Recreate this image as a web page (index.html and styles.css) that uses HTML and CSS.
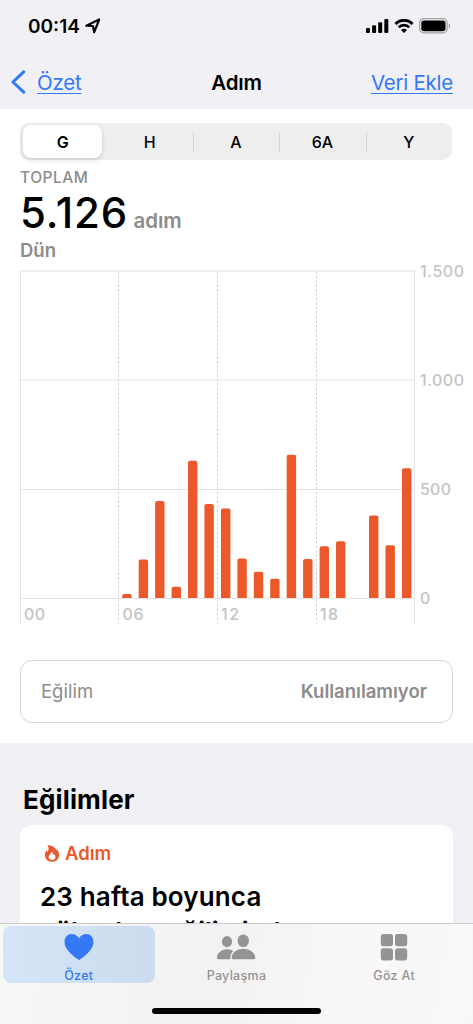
FILE: index.html
```html
<!DOCTYPE html>
<html lang="tr">
<head>
  <meta charset="UTF-8">
  <title>Adım</title>
  <link rel="stylesheet" href="styles.css">
</head>
<body>
  <div class="phone">

    <!-- Status bar + navigation -->
    <header class="top">
      <div class="status-bar">
        <div class="status-left">
          <span class="time">00:14</span>
          <svg class="location" width="16" height="16" viewBox="0 0 16 16"><path d="M1.3 7.7 14.2 1.5 9.2 14.2 7.9 8Z"/></svg>
        </div>
        <div class="status-right">
          <svg width="23" height="14" viewBox="0 0 23 14">
            <rect x="0" y="9" width="4" height="5" rx="1.1"/>
            <rect x="6.1" y="6.3" width="4" height="7.7" rx="1.1"/>
            <rect x="12.2" y="3.2" width="4" height="10.8" rx="1.1"/>
            <rect x="18.3" y="0" width="4" height="14" rx="1.1"/>
          </svg>
          <svg width="20" height="14" viewBox="0 0 20 14">
            <path class="wifi-arc" d="M1.4 4.9C6.3.2 13.7.2 18.6 4.9M4.6 8.2c3.1-2.9 7.7-2.9 10.8 0"/>
            <path d="M10 14 6.9 10.9c1.7-1.5 4.5-1.5 6.2 0Z"/>
          </svg>
          <svg width="32" height="16" viewBox="0 0 32 16">
            <rect class="battery-shell" x=".6" y=".7" width="27.6" height="14.2" rx="4.3"/>
            <rect x="2.3" y="2.4" width="24.2" height="10.8" rx="2.7"/>
            <path class="battery-cap" d="M29.7 5.4c1.9.6 1.9 4.2 0 4.8Z"/>
          </svg>
        </div>
      </div>
      <nav class="nav-bar">
        <a class="back">
          <svg width="15" height="24" viewBox="0 0 15 24"><path d="M12.7 1.8 1.9 12l10.8 10.2"/></svg>
          <span class="link">Özet</span>
        </a>
        <h1>Adım</h1>
        <a class="link add">Veri Ekle</a>
      </nav>
    </header>

    <main class="summary">
      <div class="segments">
        <span class="segment active">G</span>
        <span class="segment">H</span>
        <span class="segment divided">A</span>
        <span class="segment divided">6A</span>
        <span class="segment divided">Y</span>
      </div>

      <div class="total">
        <div class="total-label">TOPLAM</div>
        <div class="total-value"><strong>5.126</strong> <span>adım</span></div>
        <div class="total-day">Dün</div>
      </div>

      <!-- Hourly steps, 0 - 1.500 -->
      <svg class="chart" width="453" height="364" viewBox="20 264 453 364">
        <g class="grid">
          <path d="M20 271h395M20 380h395M20 489.5h395M20 598.5h395"/>
          <path d="M20.5 271v353M414.5 271v353"/>
          <path class="dashed" d="M118.5 271v352M217.5 271v352M316.5 271v352"/>
        </g>
        <g class="bars">
          <path d="M122.2 598v-2q0-2 2-2h5.4q2 0 2 2v2z"/>
          <path d="M138.7 598v-36.4q0-2 2-2h5.4q2 0 2 2V598z"/>
          <path d="M155.1 598v-95q0-2 2-2h5.4q2 0 2 2v95z"/>
          <path d="M171.6 598v-9.3q0-2 2-2h5.4q2 0 2 2v9.3z"/>
          <path d="M188 598V462.7q0-2 2-2h5.4q2 0 2 2V598z"/>
          <path d="M204.4 598v-92q0-2 2-2h5.4q2 0 2 2v92z"/>
          <path d="M221 598v-87.4q0-2 2-2h5.4q2 0 2 2V598z"/>
          <path d="M237.4 598v-37.4q0-2 2-2h5.4q2 0 2 2V598z"/>
          <path d="M253.8 598v-24.3q0-2 2-2h5.4q2 0 2 2V598z"/>
          <path d="M270.2 598v-17.2q0-2 2-2h5.4q2 0 2 2V598z"/>
          <path d="M286.7 598V456.8q0-2 2-2h5.4q2 0 2 2V598z"/>
          <path d="M303.1 598v-37q0-2 2-2h5.4q2 0 2 2v37z"/>
          <path d="M319.6 598v-49.7q0-2 2-2h5.4q2 0 2 2V598z"/>
          <path d="M336 598v-54.7q0-2 2-2h5.4q2 0 2 2V598z"/>
          <path d="M369 598v-80.6q0-2 2-2h5.4q2 0 2 2V598z"/>
          <path d="M385.5 598v-50.8q0-2 2-2h5.4q2 0 2 2V598z"/>
          <path d="M402 598V470.2q0-2 2-2h5.4q2 0 2 2V598z"/>
        </g>
        <g class="axis">
          <text x="420" y="277" textLength="44">1.500</text>
          <text x="420" y="386" textLength="44">1.000</text>
          <text x="420" y="495" textLength="31">500</text>
          <text x="420" y="604">0</text>
          <text x="24" y="620" textLength="21">00</text>
          <text x="122.5" y="620" textLength="21">06</text>
          <text x="221" y="620" textLength="18">12</text>
          <text x="320" y="620" textLength="18">18</text>
        </g>
      </svg>

      <div class="trend-row">
        <span>Eğilim</span>
        <span class="trend-value">Kullanılamıyor</span>
      </div>
    </main>

    <section class="trends">
      <h2>Eğilimler</h2>
      <article class="card">
        <div class="card-type">
          <svg width="14" height="17" viewBox="0 0 14 17"><path fill-rule="evenodd" d="M2.3.3C7.5.2 10.500 2.800 11.400 5.500c.4-.3.6-.8.5-1.400C13.300 5.800 14 8 14 10.200 14 14.200 11 16.700 7 16.700S0 14.200 0 10.500C0 8.200.8 6.300 1.800 5c0 1 .4 1.700 1 2C3.700 4.500 4.300 2 2.300.3ZM6.400 6.500c.5 1.900-2.700 3-2.700 5.500 0 1.800 1.400 2.900 3.300 2.900s3.400-1.200 3.400-3c0-1.100-.5-2-1.100-2.600-.1.600-.4 1-.8 1.200 0-1.700-.7-3.100-2.100-4Z"/></svg>
          <span>Adım</span>
        </div>
        <p>23 hafta boyunca<br><span class="second-line">yükselme eğiliminde</span></p>
      </article>
    </section>

    <footer class="tab-bar">
      <div class="tabs">
        <div class="tab active">
          <svg width="30" height="28" viewBox="0 0 30 28"><path d="M15 27C12 25 .5 17.5.5 8.900.5 4.200 3.600 1 7.700 1c3.200 0 5.800 1.700 7.300 4.500C16.500 2.700 19.100 1 22.300 1c4.100 0 7.200 3.200 7.200 7.900C29.500 17.500 18 25 15 27Z"/></svg>
          <span>Özet</span>
        </div>
        <div class="tab">
          <svg width="40" height="28" viewBox="0 0 40 28">
            <ellipse cx="11" cy="8.6" rx="5.1" ry="5.6"/>
            <path d="M1 25c0-5 4.600-8.800 10-8.800 2.600 0 4.700.7 6.300 1.800-1.900 1.600-3 3.800-3.200 8.200H2.500C1.400 26.200 1 25.800 1 25Z"/>
            <ellipse cx="27.3" cy="7.8" rx="5.7" ry="6.3"/>
            <path d="M15.600 24.800c0-5 5.300-9 11.700-9s12 4 12 9c0 .9-.5 1.400-1.500 1.400H17c-1 0-1.400-.5-1.400-1.400Z"/>
          </svg>
          <span>Paylaşma</span>
        </div>
        <div class="tab">
          <svg width="28" height="28" viewBox="0 0 28 28">
            <rect x=".8" y="1" width="12.2" height="12.2" rx="2.6"/>
            <rect x="15" y="1" width="12.2" height="12.2" rx="2.6"/>
            <rect x=".8" y="15.2" width="12.2" height="12.2" rx="2.6"/>
            <rect x="15" y="15.2" width="12.2" height="12.2" rx="2.6"/>
          </svg>
          <span>Göz At</span>
        </div>
      </div>
      <div class="home-indicator"></div>
    </footer>

  </div>
</body>
</html>
```

FILE: styles.css
```css
:root {
  --blue: #3478f6;
  --orange: #eb5829;
  --gray: #8c8c8c;
  --light-gray: #c3c3c5;
  --bg: #f0f0f5;
}
* { box-sizing: border-box; }
body {
  margin: 0;
  background-color: var(--bg);
  color: #000;
  font-family: Inter, "Liberation Sans", sans-serif;
}
h1, h2, p { margin: 0; }
.phone { display: flex; flex-direction: column; width: 473px; height: 1024px; overflow: hidden; }

/* Header */
.top { height: 109px; flex: none; background-color: var(--bg); }
.status-bar { display: flex; justify-content: space-between; height: 55px; padding: 14px 23px 0 28px; }
.status-left { display: flex; align-items: center; gap: 5px; height: 24px; }
.time { font-size: 19px; font-weight: 600; }
.location { fill: none; stroke: #000; stroke-width: 2.2; stroke-linejoin: round; }
.status-right { display: flex; align-items: center; gap: 5px; height: 23px; margin-right: -1px; }
.wifi-arc { fill: none; stroke: #000; stroke-width: 2.8; }
.battery-shell { fill: none; stroke: #a3a3a6; stroke-width: 1.2; }
.battery-cap { fill: #a3a3a6; }
.nav-bar { display: grid; grid-template-columns: 1fr auto 1fr; align-items: center; height: 54px; padding: 0 20px 0 11px; }
.back { display: flex; align-items: center; gap: 11px; }
.back svg { fill: none; stroke: var(--blue); stroke-width: 3; stroke-linecap: round; stroke-linejoin: round; }
.link { color: var(--blue); font-size: 20.5px; letter-spacing: -0.25px; text-decoration: underline; text-decoration-thickness: 1px; text-underline-offset: 3px; }
.add { justify-self: end; }
h1 { margin-left: 9px; font-size: 20.5px; font-weight: 600; letter-spacing: -0.2px; }

/* Summary */
.summary { height: 634px; flex: none; padding: 14px 20px 0; background-color: #fff; }
.segments { display: grid; grid-template-columns: repeat(5, 1fr); height: 37px; margin-right: 1px; padding: 2px 0; border-radius: 9px; background-color: #eeeeef; }
.segment { display: flex; align-items: center; justify-content: center; font-size: 16px; font-weight: 500; }
.segment.active { margin: 0 4px 0 3px; border-radius: 8px; background-color: #fff; font-weight: 600; box-shadow: 0 2px 5px rgba(0, 0, 0, 0.14); }
.segment.divided { background: linear-gradient(#d8d8da, #d8d8da) left center / 1px 20px no-repeat; }
.total { height: 104px; padding-top: 8px; color: var(--gray); }
.total-label { font-size: 15.5px; font-weight: 500; line-height: 19px; letter-spacing: 0.5px; }
.total-value { height: 50px; font-size: 20.5px; font-weight: 600; line-height: 51px; white-space: nowrap; }
.total-value strong { color: #000; font-size: 42px; font-weight: 500; letter-spacing: 0.9px; }
.total-day { font-size: 18.5px; font-weight: 600; line-height: 26px; }

/* Chart */
.chart { display: block; }
.grid path { fill: none; stroke: #e3e3e5; stroke-width: 1; }
.grid .dashed { stroke: #d2d2d4; stroke-dasharray: 2.5 2; }
.bars { fill: var(--orange); }
.axis { fill: var(--light-gray); font-size: 16px; font-weight: 500; }

.trend-row { display: flex; align-items: center; justify-content: space-between; height: 63px; margin-top: 32px; padding: 0 25px 2px 20px; border: 1.5px solid #d7d7d9; border-radius: 12px; color: var(--gray); font-size: 18.5px; }
.trend-value { font-weight: 600; }

/* Trends */
.trends { height: 180px; flex: none; padding: 41px 20px 0; overflow: hidden; }
h2 { margin-left: 3px; height: 41px; font-size: 26px; font-weight: 700; line-height: 32px; letter-spacing: 0.15px; }
.card { height: 160px; padding: 16px 20px; border-radius: 12px; background-color: #fff; }
.card-type { display: flex; align-items: center; gap: 6px; height: 24px; padding-left: 5px; color: var(--orange); font-size: 18.5px; font-weight: 600; }
.card-type svg { fill: var(--orange); }
.card p { margin-top: 14px; font-size: 26px; font-weight: 600; line-height: 35px; letter-spacing: 0.15px; white-space: nowrap; }
.second-line { letter-spacing: -0.1px; }

/* Tab bar */
.tab-bar { display: flex; flex-direction: column; align-items: center; height: 101px; flex: none; border-top: 1px solid #cbcbcd; background: linear-gradient(100deg, #f7f7f8, #f3f2f3 45%, #f9f7f7 75%, #f8f8fa); }
.tabs { display: grid; grid-template-columns: repeat(3, 1fr); gap: 5px; width: 468px; height: 60px; padding-top: 2px; }
.tab { display: flex; flex-direction: column; align-items: center; height: 57px; padding-top: 7px; border-radius: 8px; color: #949494; font-size: 12.5px; font-weight: 500; letter-spacing: 0.3px; }
.tab svg { flex: none; fill: currentColor; }
.tab span { margin-top: 7px; line-height: 16px; }
.tab.active { background: linear-gradient(90deg, #d4e5f8, #cbdcef); color: var(--blue); }
.home-indicator { width: 169px; height: 6px; margin-top: 24px; border-radius: 3px; background-color: #000; }
```
